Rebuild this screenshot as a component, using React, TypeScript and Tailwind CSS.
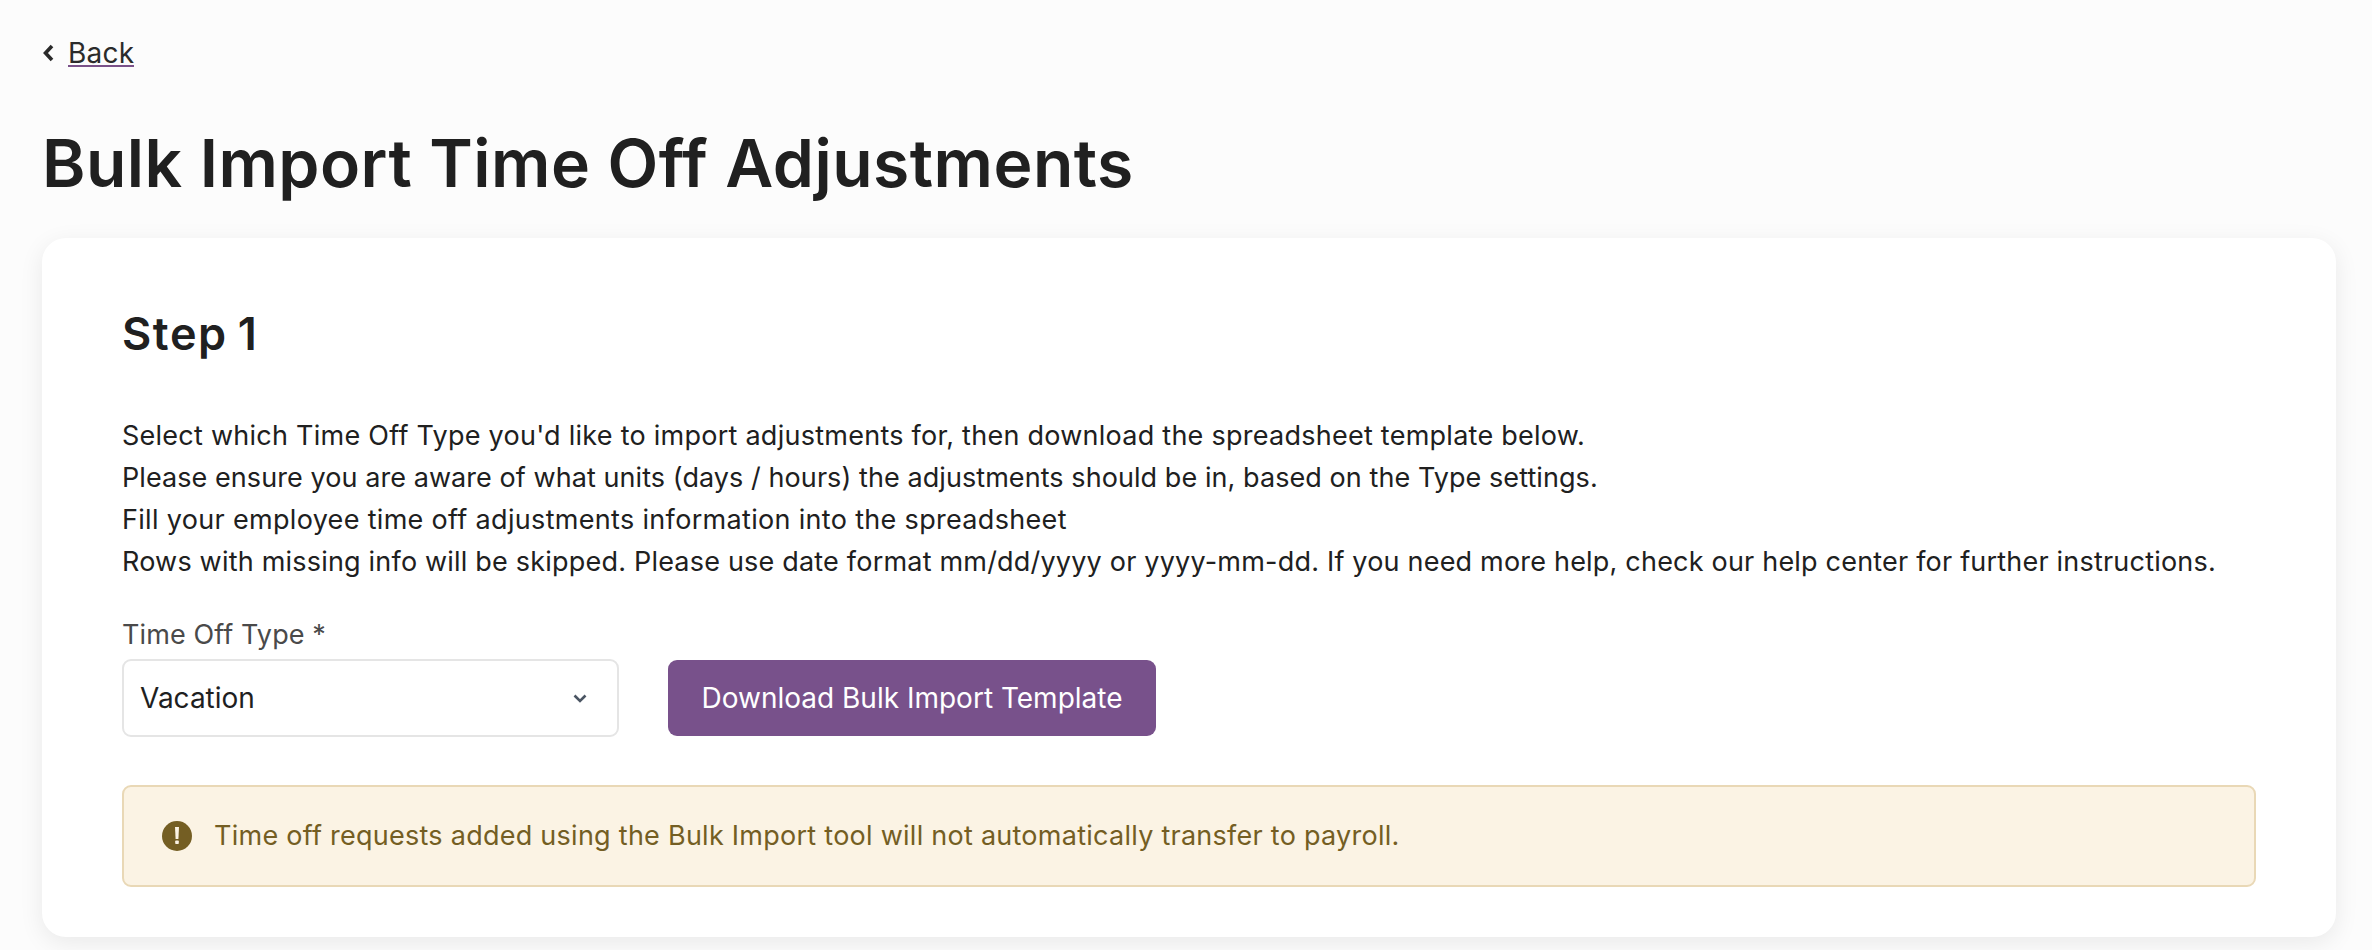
export default function App() {
  return (
    <div className="min-h-[950px] bg-[#fcfcfc] pl-[42px] pr-[36px] pt-[33px] text-[#1f1f1f] font-['Inter',sans-serif] overflow-hidden">
      <a className="flex items-center h-[42px] text-[28px] leading-[42px] gap-[14px] w-fit">
        <svg width="12" height="18" viewBox="0 0 12 18" fill="none" className="shrink-0 mb-[2px]">
          <path d="M10 2 3.5 9l6.5 7" stroke="#2a2a2a" strokeWidth="3.6" />
        </svg>
        <span className="border-b-2 border-[#7a5189] leading-[24px] h-[26px] tracking-[0.2px] text-[#2b2b2b]">Back</span>
      </a>
      <h1 className="mt-[46px] text-[66px] leading-[84px] font-semibold tracking-[0.46px] text-[#202020]">Bulk Import Time Off Adjustments</h1>
      <div className="mt-[33px] h-[699px] rounded-[24px] bg-white px-[80px] pt-[69px] shadow-[0_6px_24px_rgba(0,0,0,0.08)]">
        <h2 className="text-[45px] leading-[54px] font-semibold tracking-[1.6px] [word-spacing:-3px] text-[#202020]">Step 1</h2>
        <div className="mt-[54px] text-[27px] leading-[42px] text-[#202020]">
          <p className="tracking-[0.255px]">Select which Time Off Type you'd like to import adjustments for, then download the spreadsheet template below.</p>
          <p className="tracking-[0.07px]">Please ensure you are aware of what units (days / hours) the adjustments should be in, based on the Type settings.</p>
          <p className="tracking-[0.32px]">Fill your employee time off adjustments information into the spreadsheet</p>
          <p className="tracking-[0.2px]">Rows with missing info will be skipped. Please use date format mm/dd/yyyy or yyyy-mm-dd. If you need more help, check our help center for further instructions.</p>
        </div>
        <div className="mt-[34px] flex items-end gap-[49px]">
          <div>
            <label className="block text-[27px] leading-[36px] tracking-[0.1px] text-[#4a4a4a] mb-[6px]">Time Off Type *</label>
            <div className="flex h-[78px] w-[497px] items-center justify-between rounded-[9px] border-[2px] border-[#e5e5e5] bg-white pl-[16px] pr-[30px] text-[28px]">
              <span>Vacation</span>
              <svg width="14" height="9" viewBox="0 0 14 9" fill="none"><path d="M1.5 1.5 7 7l5.5-5.5" stroke="#4b5563" strokeWidth="2.6" /></svg>
            </div>
          </div>
          <button className="flex h-[76px] w-[488px] mb-[1px] items-center justify-center rounded-[9px] bg-[#78518b] text-[28px] text-white">Download Bulk Import Template</button>
        </div>
        <div className="mt-[48px] flex h-[102px] items-center gap-[22px] rounded-[9px] border-[2px] border-[#e9d8b6] bg-[#fbf3e4] pl-[38px] text-[27px] tracking-[0.26px] text-[#745e23]">
          <svg width="30" height="30" viewBox="0 0 30 30" className="shrink-0">
            <circle cx="15" cy="15" r="15" fill="#745e23" />
            <path d="M13 6h4l-.6 12h-2.8z" fill="#fbf3e4" />
            <rect x="13.2" y="19.5" width="3.6" height="3.6" rx="0.8" fill="#fbf3e4" />
          </svg>
          <span>Time off requests added using the Bulk Import tool will not automatically transfer to payroll.</span>
        </div>
      </div>
    </div>
  );
}
